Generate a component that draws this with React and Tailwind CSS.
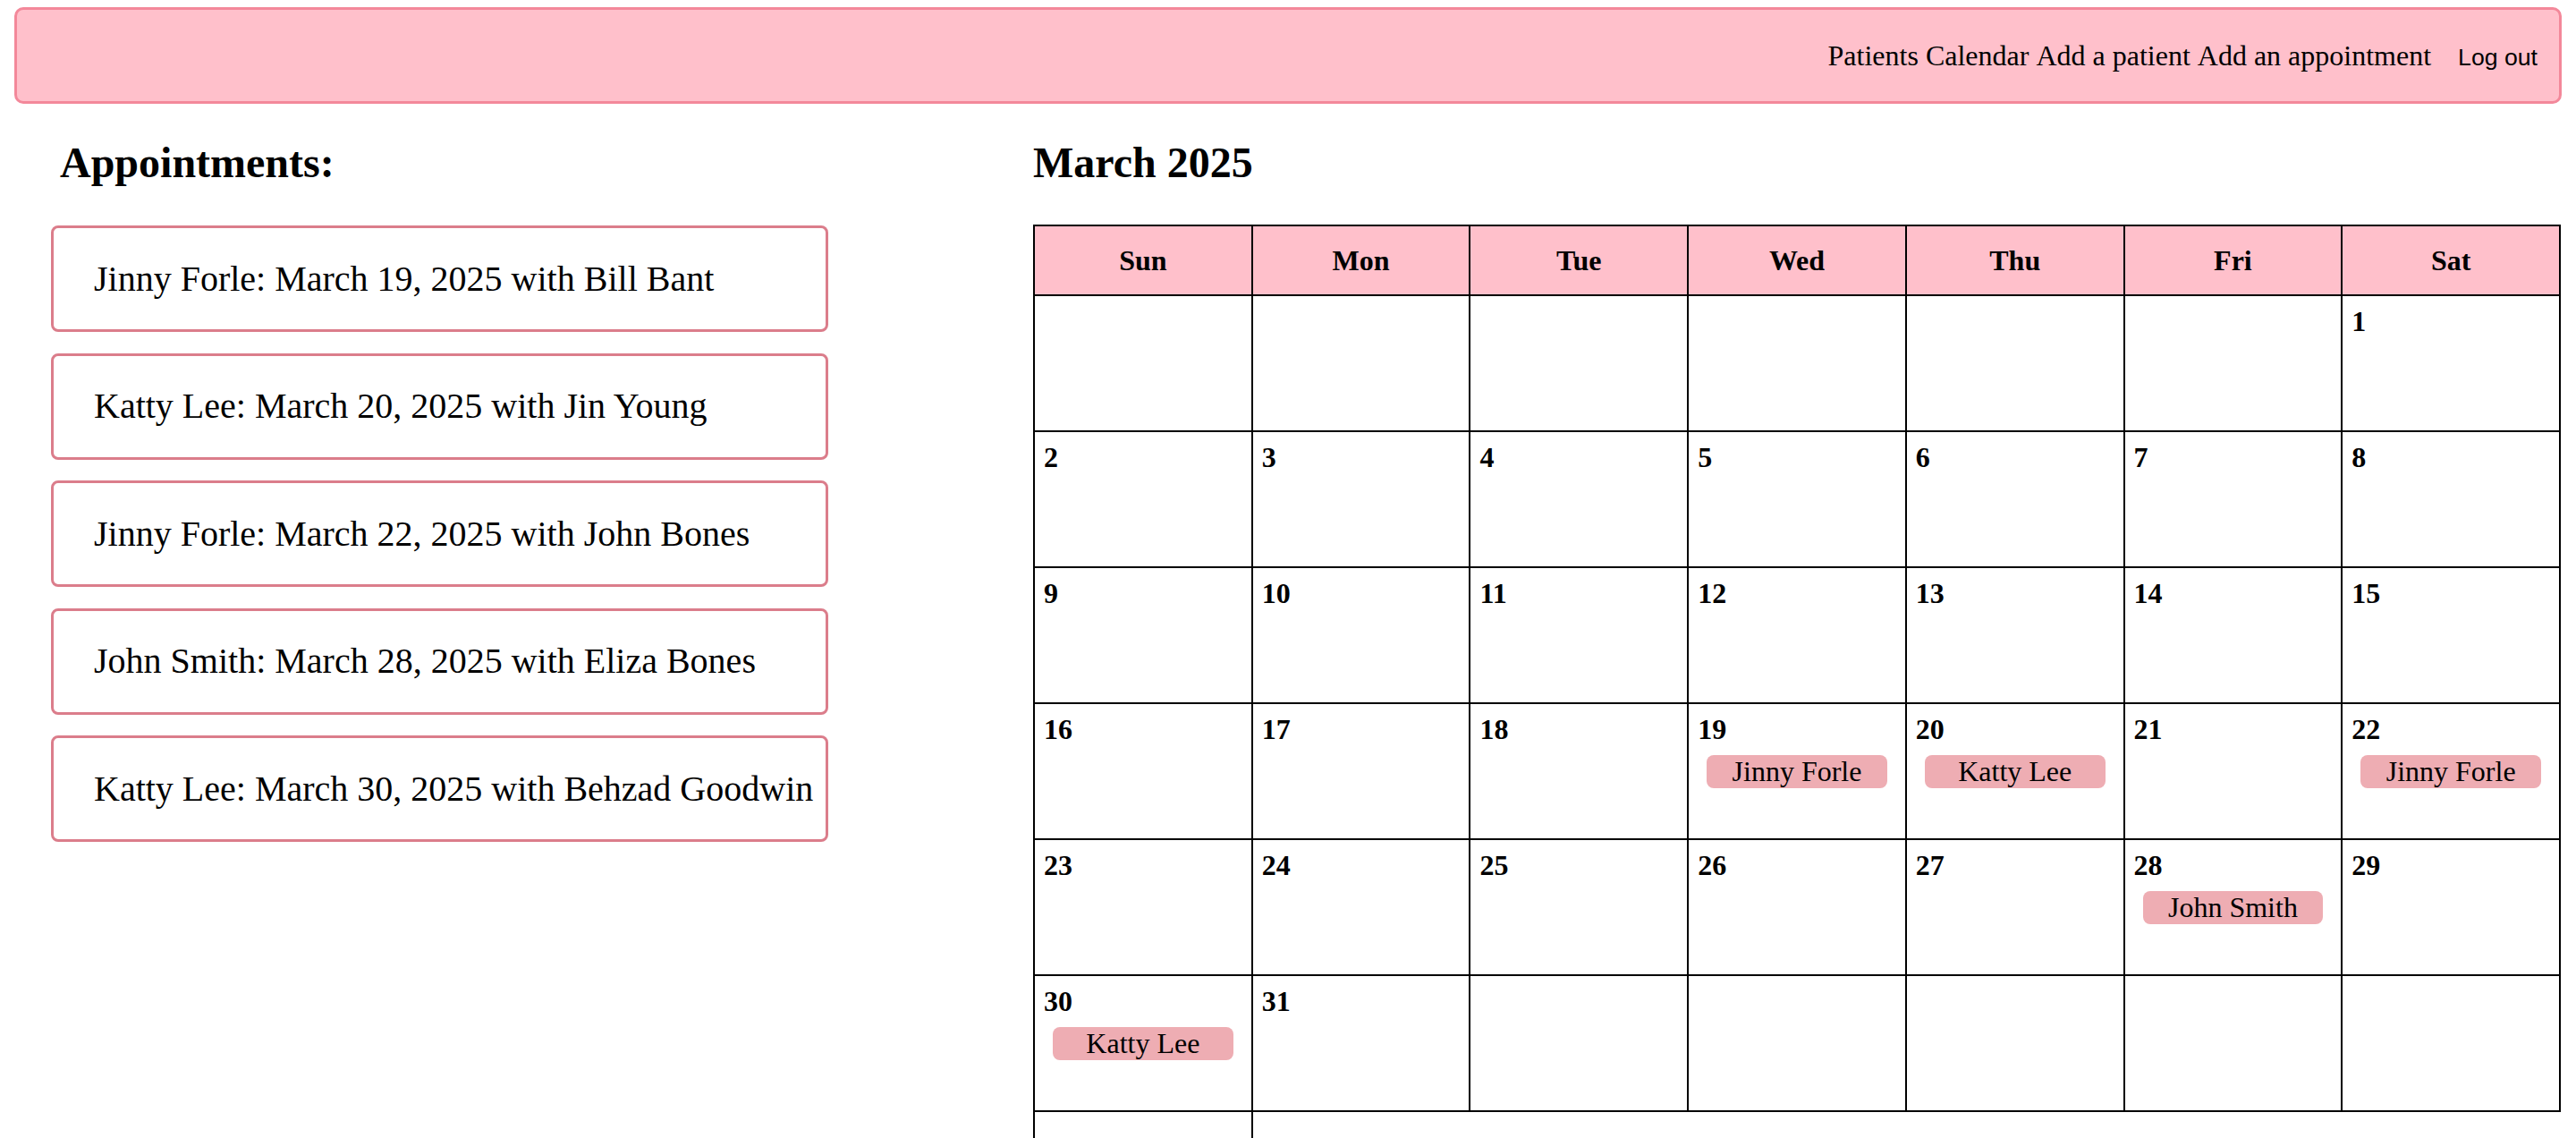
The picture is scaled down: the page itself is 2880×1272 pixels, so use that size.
import React from 'react';

const appointments = [
  'Jinny Forle: March 19, 2025 with Bill Bant',
  'Katty Lee: March 20, 2025 with Jin Young',
  'Jinny Forle: March 22, 2025 with John Bones',
  'John Smith: March 28, 2025 with Eliza Bones',
  'Katty Lee: March 30, 2025 with Behzad Goodwin',
];

const events = {
  19: 'Jinny Forle',
  20: 'Katty Lee',
  22: 'Jinny Forle',
  28: 'John Smith',
  30: 'Katty Lee',
};

const weekDays = ['Sun', 'Mon', 'Tue', 'Wed', 'Thu', 'Fri', 'Sat'];

// March 2025 starts on a Saturday
const buildCells = () => {
  const cells = [];
  for (let i = 0; i < 6; i++) cells.push(null);
  for (let d = 1; d <= 31; d++) cells.push(d);
  while (cells.length % 7 !== 0) cells.push(null);
  return cells;
};

const DayCell = ({ day }) => (
  <div className="h-[152px] border-r-2 border-b-2 border-black p-[10px]">
    {day && <div className="text-[32px] font-bold leading-[37px]">{day}</div>}
    {day && events[day] && (
      <div className="mt-[10px] mx-[10px] h-[37px] rounded-[8px] bg-[#eeadb3] text-center text-[32px] leading-[37px]">
        {events[day]}
      </div>
    )}
  </div>
);

const App = () => {
  const cells = buildCells();

  return (
    <div className="min-h-screen bg-white text-black font-['Liberation_Serif','Times_New_Roman',serif]">
      <nav className="mx-[16px] mt-[8px] h-[108px] rounded-[10px] border-[3px] border-[#f3889a] bg-[#ffc0cb] flex justify-end items-baseline pt-[33px] pr-[24px]">
        <div className="flex gap-[8px] text-[32px] leading-[37px]">
          <a href="#">Patients</a>
          <a href="#">Calendar</a>
          <a href="#">Add a patient</a>
          <a href="#">Add an appointment</a>
        </div>
        <button className="ml-[30px] font-['Liberation_Sans',Arial,sans-serif] text-[26.67px] leading-[31px]">
          Log out
        </button>
      </nav>

      <div className="flex mt-[38px]">
        <section className="ml-[57px] w-[869px] shrink-0">
          <h2 className="ml-[10px] text-[48px] font-bold leading-[55px]">Appointments:</h2>
          <div className="mt-[43px] flex flex-col gap-[23.5px]">
            {appointments.map((a) => (
              <div
                key={a}
                className="h-[119px] flex items-center rounded-[8px] border-[3px] border-[#db7d8b] pl-[45px] text-[40px] whitespace-nowrap"
              >
                {a}
              </div>
            ))}
          </div>
        </section>

        <section className="ml-[229px] w-[1708px] shrink-0">
          <h2 className="text-[48px] font-bold leading-[55px]">March 2025</h2>
          <div className="mt-[42px] grid grid-cols-7 border-l-2 border-t-2 border-black">
            {weekDays.map((w) => (
              <div
                key={w}
                className="h-[78px] flex items-center justify-center bg-[#ffc0cb] border-r-2 border-b-2 border-black text-[32px] font-bold"
              >
                {w}
              </div>
            ))}
            {cells.map((d, i) => (
              <DayCell key={i} day={d} />
            ))}
            <DayCell day={null} />
          </div>
        </section>
      </div>
    </div>
  );
};

export default App;
